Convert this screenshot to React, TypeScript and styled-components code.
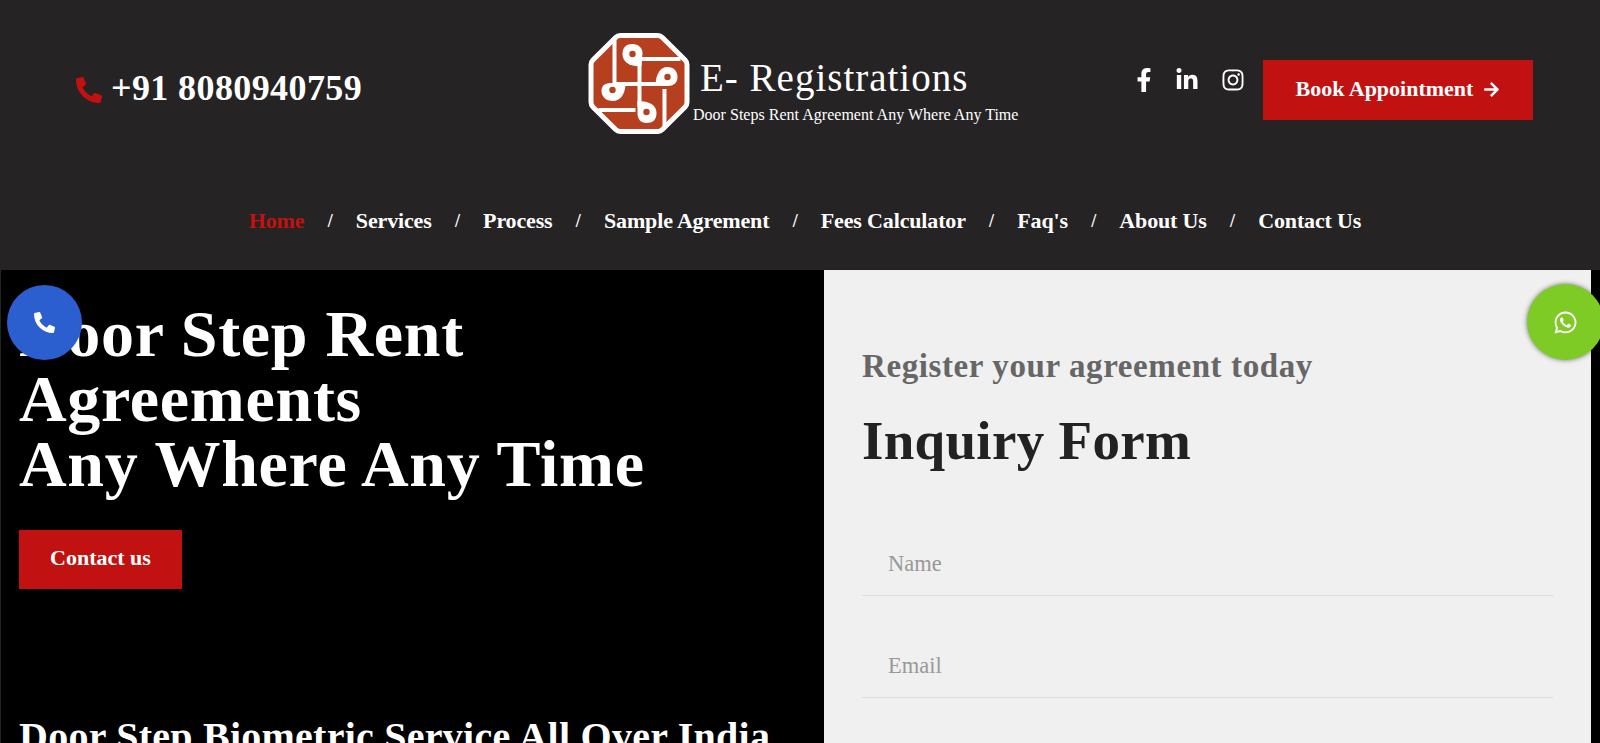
import React, { FC } from 'react';
import styled, { createGlobalStyle } from 'styled-components';
import { FaArrowRight, FaFacebookF, FaInstagram, FaLinkedinIn, FaPhoneAlt, FaWhatsapp } from 'react-icons/fa';

const NAV_ITEMS = ['Home', 'Services', 'Process', 'Sample Agrement', 'Fees Calculator', "Faq's", 'About Us', 'Contact Us'];
const OCTAGON = 'M31.7 9 H69.3 L92 31.7 V69.3 L69.3 92 H31.7 L9 69.3 V31.7 Z';

const Logo: FC = () => (
  <LogoSvg viewBox="0 0 101 101">
    <path d={OCTAGON} fill="#fff" stroke="#fff" strokeWidth="18" strokeLinejoin="round" />
    <path d={OCTAGON} fill="#b63f20" stroke="#b63f20" strokeWidth="8" strokeLinejoin="round" />
    <g fill="none" stroke="#fff" strokeWidth="4">
      <path d="M26 6 V51 H74" />
      <path d="M51 24 V74" />
      <path d="M51 26 H92" />
      <path d="M76 56 V94" />
      <path d="M10 77 H47" />
    </g>
    <g fill="#fff">
      <path d="M53 33 C41 34 34 29 34 21 C34 14 38 11 44 11 C50 11 54 15 54 20 Z" />
      <path d="M67 53 C67 41 72 34 79 34 C85 34 89 38 89 44 C89 50 85 53 79 53 Z" />
      <path d="M37 50 C37 61 32 68 24 68 C18 68 13 64 13 58 C13 52 17 50 23 50 Z" />
      <path d="M49 68 C61 68 68 72 68 80 C68 87 64 90 58 90 C52 90 49 86 49 80 Z" />
    </g>
    <g fill="#b63f20">
      <circle cx="44" cy="21" r="3.2" />
      <circle cx="79" cy="44" r="3.2" />
      <circle cx="24" cy="57" r="3.2" />
      <circle cx="58" cy="79" r="3.2" />
    </g>
  </LogoSvg>
);

export default function App() {
  return (
    <>
      <GlobalStyle />
      <Header>
        <TopRow>
          <PhoneLink>
            <PhoneIcon />
            +91 8080940759
          </PhoneLink>
          <Brand>
            <Logo />
            <BrandText>
              <BrandName>E- Registrations</BrandName>
              <BrandTag>Door Steps Rent Agreement Any Where Any Time</BrandTag>
            </BrandText>
          </Brand>
          <HeaderActions>
            <Socials>
              <FaFacebookF size={24} />
              <FaLinkedinIn size={24} />
              <FaInstagram size={24} />
            </Socials>
            <BookButton>
              Book Appointment
              <FaArrowRight size={17} />
            </BookButton>
          </HeaderActions>
        </TopRow>
        <Nav>
          {NAV_ITEMS.map((item, i) => (
            <React.Fragment key={item}>
              {i > 0 ? <NavSlash>/</NavSlash> : null}
              <NavLink $active={i === 0}>{item}</NavLink>
            </React.Fragment>
          ))}
        </Nav>
      </Header>

      <Main>
        <HeroColumn>
          <HeroTitle>
            Door Step Rent
            <br />
            Agreements
            <br />
            Any Where Any Time
          </HeroTitle>
          <ContactButton>Contact us</ContactButton>
          <HeroSubtitle>Door Step Biometric Service All Over India</HeroSubtitle>
        </HeroColumn>
        <FormPanel>
          <FormKicker>Register your agreement today</FormKicker>
          <FormTitle>Inquiry Form</FormTitle>
          <Field placeholder="Name" />
          <Field placeholder="Email" />
        </FormPanel>
      </Main>

      <FloatingCall>
        <FaPhoneAlt size={21} />
      </FloatingCall>
      <FloatingChat>
        <FaWhatsapp size={25} />
      </FloatingChat>
    </>
  );
}

const GlobalStyle = createGlobalStyle`
  html, body {
    margin: 0;
    height: 743px;
    overflow: hidden;
    background: #252324;
  }
  body, input {
    font-family: "Liberation Serif", "Times New Roman", serif;
  }
`;

const Header = styled.header`
  height: 270px;
  background-color: #252324;
  color: #fff;
`;

const TopRow = styled.div`
  height: 177px;
  display: flex;
  align-items: flex-start;
  padding: 0 67px 0 76px;
  box-sizing: border-box;
`;

const PhoneLink = styled.div`
  width: 512px;
  flex: none;
  display: flex;
  align-items: flex-start;
  padding-top: 67px;
  font-size: 36px;
  line-height: 42px;
  font-weight: 700;
  letter-spacing: 0.4px;
  white-space: nowrap;
`;

const PhoneIcon = styled(FaPhoneAlt)`
  width: 26px;
  height: 26px;
  margin: 10px 9px 0 0;
  color: #c21111;
`;

const Brand = styled.div`
  width: 544px;
  flex: none;
  display: flex;
  align-items: flex-start;
  padding-top: 33px;
`;

const LogoSvg = styled.svg`
  width: 102px;
  height: 101px;
  flex: none;
`;

const BrandText = styled.div`
  display: flex;
  flex-direction: column;
  margin: 23px 0 0 10px;
`;

const BrandName = styled.div`
  font-size: 39px;
  line-height: 44px;
  letter-spacing: 1px;
  white-space: nowrap;
`;

const BrandTag = styled.div`
  font-size: 16px;
  line-height: 20px;
  margin: 5px 0 0 -7px;
  letter-spacing: 0.02px;
  white-space: nowrap;
`;

const HeaderActions = styled.div`
  display: flex;
  align-items: flex-start;
  padding-top: 60px;
`;

const Socials = styled.div`
  display: flex;
  gap: 22px;
  margin: 8px 18px 0 0;
  & > svg:first-child {
    margin-right: -3px;
  }
`;

const BookButton = styled.button`
  width: 270px;
  height: 60px;
  border: 0;
  padding: 0 0 2px;
  display: flex;
  align-items: center;
  justify-content: center;
  gap: 10px;
  background-color: #c21111;
  color: #fff;
  font-family: inherit;
  font-size: 22px;
  font-weight: 700;
`;

const Nav = styled.nav`
  display: flex;
  align-items: center;
  justify-content: center;
  padding-left: 10px;
  font-size: 22px;
  line-height: 30px;
  margin-top: 29px;
  font-weight: 700;
  letter-spacing: -0.15px;
`;

const NavLink = styled.a<{ $active?: boolean }>`
  color: ${({ $active }) => ($active ? '#c21111' : '#fff')};
  white-space: nowrap;
`;

const NavSlash = styled.span`
  font-size: 18px;
  font-weight: 700;
  margin: 0 23.3px;
`;

const Main = styled.main`
  height: 473px;
  margin-left: 1px;
  padding-right: 9px;
  display: grid;
  grid-template-columns: 823px 1fr;
  background-color: #000;
  overflow: hidden;
`;

const HeroColumn = styled.section`
  padding: 31px 0 0 18px;
  color: #fff;
`;

const HeroTitle = styled.h1`
  margin: 0;
  font-size: 66px;
  line-height: 65px;
  font-weight: 700;
  letter-spacing: 0.7px;
`;

const ContactButton = styled.button`
  display: block;
  width: 163px;
  height: 59px;
  margin-top: 34px;
  padding: 0 0 3px;
  border: 0;
  background-color: #c21111;
  color: #fff;
  font-family: inherit;
  font-size: 22px;
  font-weight: 700;
`;

const HeroSubtitle = styled.h2`
  margin: 124px 0 0;
  font-size: 40px;
  line-height: 48px;
  font-weight: 700;
  letter-spacing: 0.25px;
  white-space: nowrap;
`;

const FormPanel = styled.section`
  background-color: #f0f0f0;
  padding: 74px 38px 0 38px;
`;

const FormKicker = styled.h3`
  margin: 0;
  font-size: 33px;
  line-height: 44px;
  font-weight: 700;
  letter-spacing: 0.6px;
  color: #666;
`;

const FormTitle = styled.h2`
  margin: 20px 0 56px;
  font-size: 55px;
  line-height: 66px;
  font-weight: 700;
  letter-spacing: 0.3px;
  color: #222;
`;

const Field = styled.input`
  display: block;
  width: 100%;
  height: 66px;
  box-sizing: border-box;
  margin-top: 36px;
  padding: 3px 26px 0;
  border: 0;
  border-bottom: 1px solid #ddd;
  background: transparent;
  font-size: 22.5px;
  outline: none;
  &::placeholder {
    color: #999;
    opacity: 1;
  }
`;

const FloatingCall = styled.div`
  position: fixed;
  left: 7px;
  top: 285px;
  width: 75px;
  height: 75px;
  border-radius: 50%;
  display: flex;
  align-items: center;
  justify-content: center;
  background-color: #2b5fd0;
  color: #fff;
`;

const FloatingChat = styled.div`
  position: fixed;
  left: 1527px;
  top: 284px;
  width: 77px;
  height: 76px;
  border-radius: 50%;
  display: flex;
  align-items: center;
  justify-content: center;
  background-color: #7fcb26;
  color: #fff;
  box-shadow: 0 0 5px rgba(0, 0, 0, 0.55);
`;
